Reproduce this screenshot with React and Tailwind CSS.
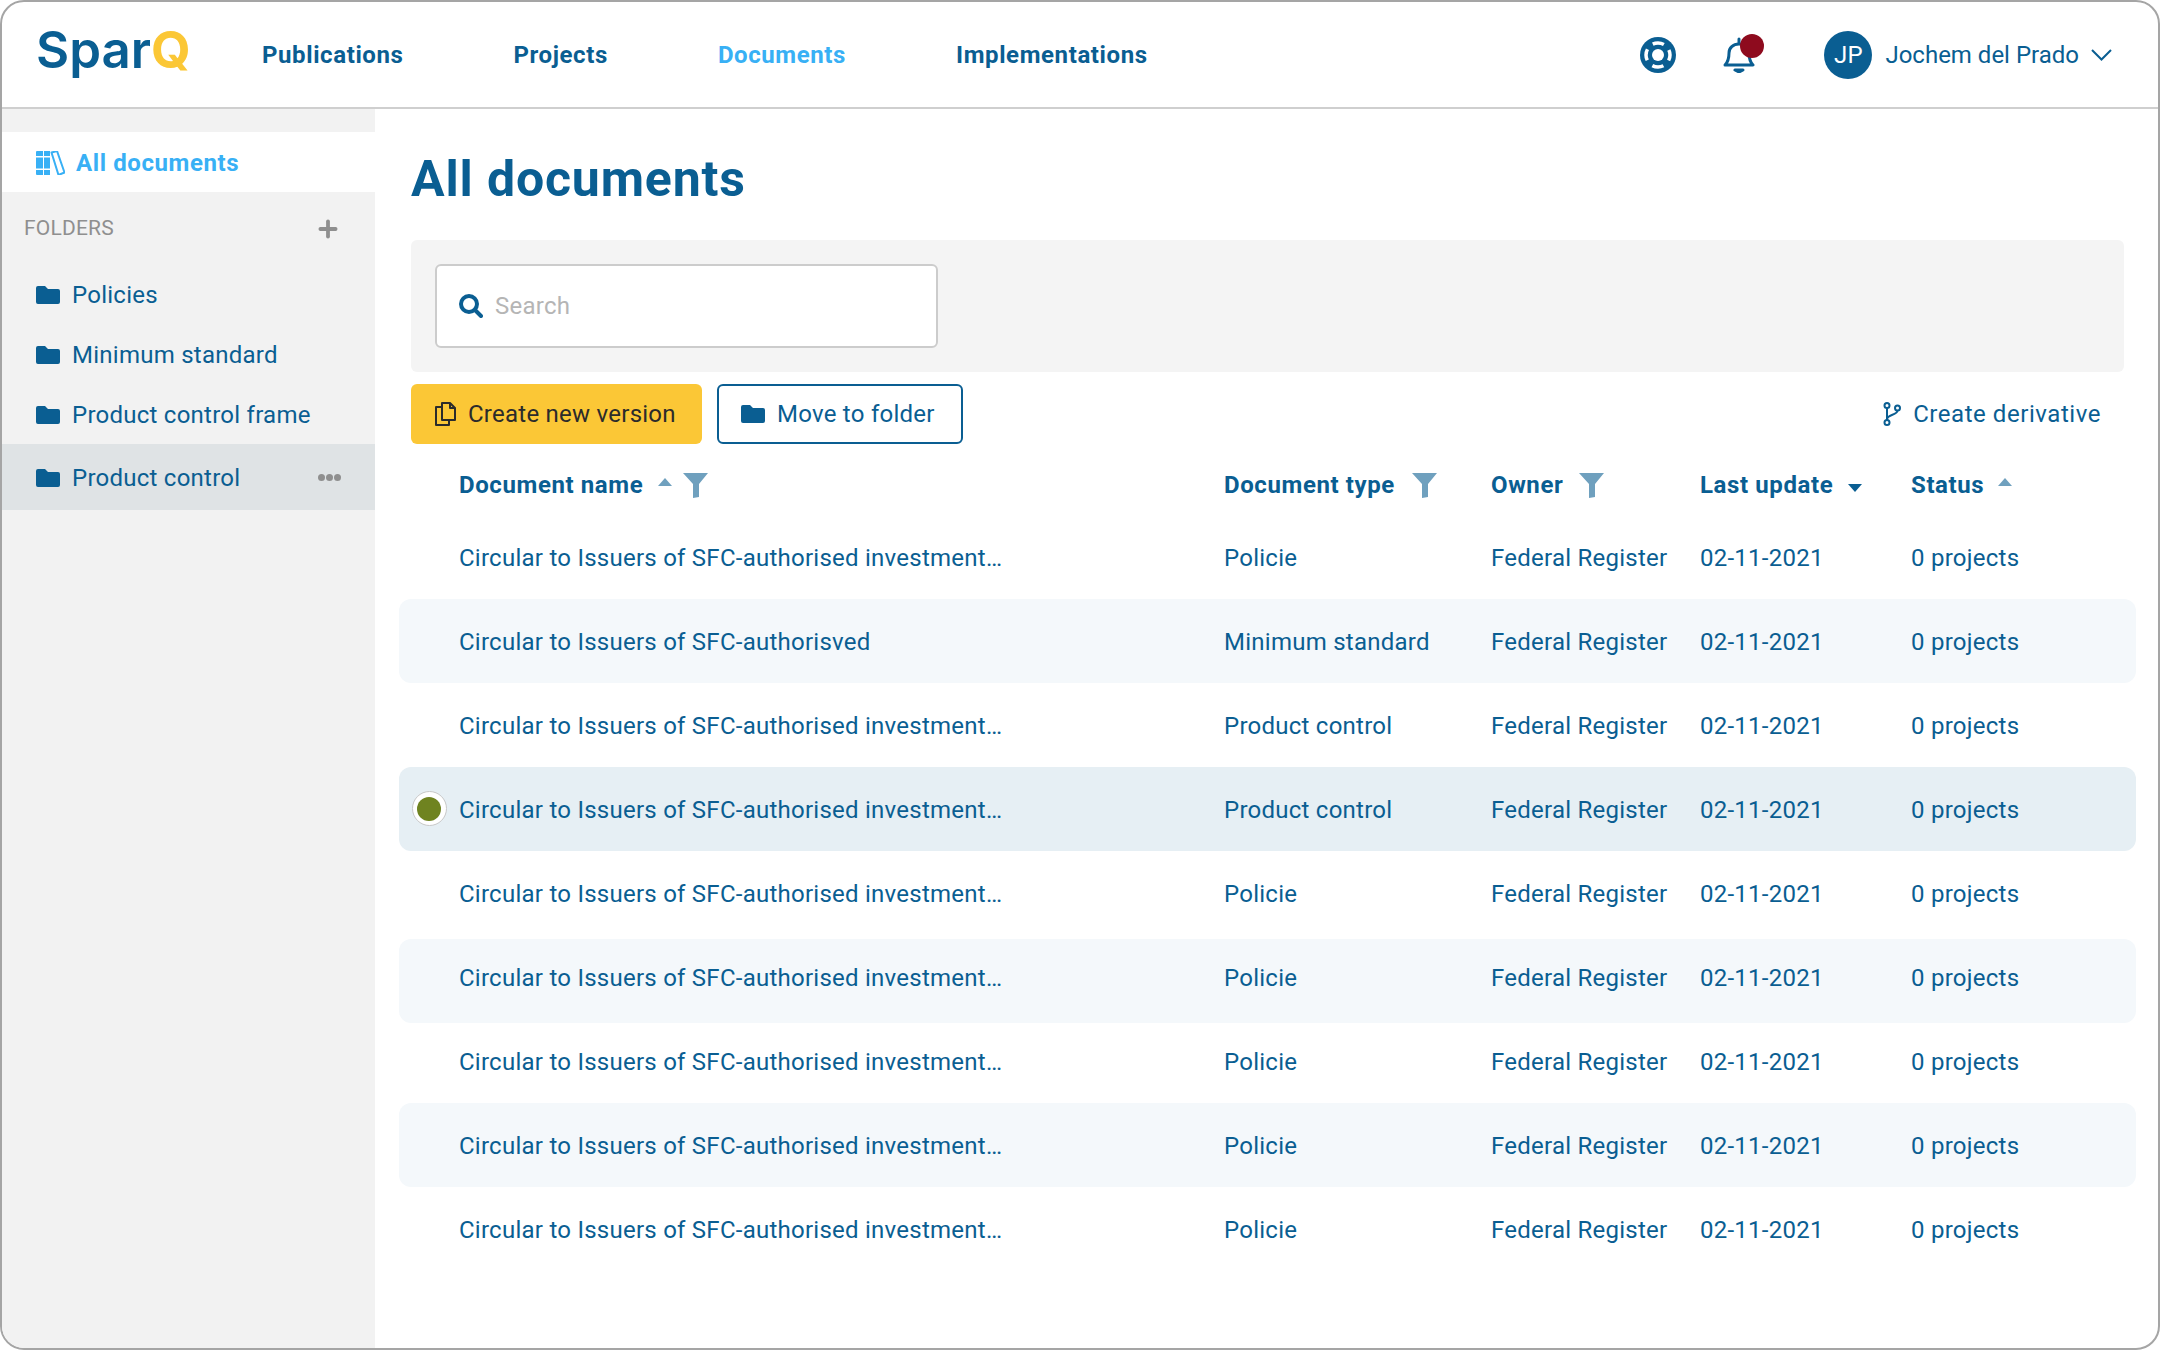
import React from 'react';
import { Plus } from 'lucide-react';

const font = { fontFamily: 'Roboto, sans-serif' };

const navItems = ['Publications', 'Projects', 'Documents', 'Implementations'];
const folders = ['Policies', 'Minimum standard', 'Product control frame'];

const rows = [
    { name: 'Circular to Issuers of SFC-authorised investment…', type: 'Policie' },
    { name: 'Circular to Issuers of SFC-authorisved', type: 'Minimum standard', tint: 'bg-[#f4f8fb]' },
    { name: 'Circular to Issuers of SFC-authorised investment…', type: 'Product control' },
    { name: 'Circular to Issuers of SFC-authorised investment…', type: 'Product control', tint: 'bg-[#e6eff4]', selected: true },
    { name: 'Circular to Issuers of SFC-authorised investment…', type: 'Policie' },
    // фон этой строки в макете сдвинут на 4px вниз относительно текста
    { name: 'Circular to Issuers of SFC-authorised investment…', type: 'Policie', tint: 'bg-[#f4f8fb] mt-[4px] -mb-[4px] pb-[8px]' },
    { name: 'Circular to Issuers of SFC-authorised investment…', type: 'Policie' },
    { name: 'Circular to Issuers of SFC-authorised investment…', type: 'Policie', tint: 'bg-[#f4f8fb]' },
    { name: 'Circular to Issuers of SFC-authorised investment…', type: 'Policie' },
];

function FolderIcon({ className }) {
    return (
        <svg viewBox="0 0 24 18" className={className} fill="currentColor">
            <path d="M2 0h7l3 3h10a2 2 0 0 1 2 2v11a2 2 0 0 1-2 2H2a2 2 0 0 1-2-2V2a2 2 0 0 1 2-2z" />
        </svg>
    );
}

function FilterIcon() {
    return (
        <svg viewBox="0 0 25 25" className="w-[25px] h-[25px] text-[#6fa0be]" fill="currentColor">
            <path d="M0 0h25L16 11v13l-6 1V11z" />
        </svg>
    );
}

function SortArrow({ down, className }) {
    return (
        <svg viewBox="0 0 14 8" className={`w-[14px] h-[8px] ${className}`} fill="currentColor">
            <path d={down ? 'M0 0h14L7 8z' : 'M7 0l7 8H0z'} />
        </svg>
    );
}

function BooksIcon() {
    return (
        <svg viewBox="0 0 29 24" className="w-[29px] h-[24px] text-[#38b0f5]" fill="currentColor">
            <path d="M1 0h6v24H1a1 1 0 0 1-1-1V1a1 1 0 0 1 1-1zM8 0h6v24H8z" />
            <path d="M0 5h14v1.5H0zM0 17.5h14v1.5H0z" fill="#fff" />
            <path d="M15.5 1.5l5.5-1.5 7.5 21.5-6 2.5z" fill="none" stroke="currentColor" strokeWidth="2" strokeLinejoin="round" />
        </svg>
    );
}

function LifeRing() {
    return (
        <svg viewBox="0 0 36 36" className="w-[36px] h-[36px] text-[#0a5e92]">
            <circle cx="18" cy="18" r="18" fill="currentColor" />
            <circle cx="18" cy="18" r="12" fill="none" stroke="#fff" strokeWidth="3.5" strokeDasharray="11.5 7.35" strokeDashoffset="5.75" />
            <circle cx="18" cy="18" r="6" fill="#fff" />
        </svg>
    );
}

function Bell() {
    return (
        <svg viewBox="0 0 32 36" className="w-[32px] h-[36px] text-[#0a5e92]" fill="none" stroke="currentColor" strokeWidth="3" strokeLinejoin="round" strokeLinecap="round">
            <path d="M2 28c3-3 4-6 4-12 0-5 4-9 10-9s10 4 10 9c0 6 1 9 4 12z" />
            <path d="M16 2v4" />
            <path d="M12 33h8l-4 2z" fill="currentColor" />
        </svg>
    );
}

function CopyIcon() {
    return (
        <svg viewBox="0 0 21 24" className="w-[21px] h-[24px] text-[#2b2b2b]" fill="none" stroke="currentColor" strokeWidth="2" strokeLinejoin="round">
            <path d="M7 1h8l5 5v12H7z" />
            <path d="M15 1v5h5" />
            <path d="M7 5H1v18h13v-5" />
        </svg>
    );
}

function BranchIcon() {
    return (
        <svg viewBox="0 0 18 24" className="w-[18px] h-[24px]" fill="none" stroke="currentColor" strokeWidth="2">
            <circle cx="4" cy="3.5" r="2.5" />
            <circle cx="4" cy="20.5" r="2.5" />
            <circle cx="14.5" cy="6" r="2.5" />
            <path d="M4 6v12" />
            <path d="M14.5 8.5c0 5-10.5 3.5-10.5 9" />
        </svg>
    );
}

export default function App() {
    return (
        <div className="w-[2160px] h-[1350px] bg-white border-2 border-[#a5a5a5] rounded-[24px] overflow-hidden text-[24px] tracking-[0.25px] text-[#0a5e92] flex flex-col" style={font}>
            {/* Шапка */}
            <header className="h-[107px] shrink-0 border-b-2 border-[#cfcfcf] flex items-center pl-[34px] pr-[46px]">
                <div className="w-[226px] text-[51px] font-semibold leading-none tracking-normal -mt-[10px]" style={{ fontFamily: 'Inter, sans-serif' }}>
                    Spar<span className="text-[#fbc736] font-bold">Q</span>
                </div>
                <nav className="flex gap-[110px] font-bold tracking-[0.6px]">
                    {navItems.map(item => (
                        <span key={item} className={item === 'Documents' ? 'text-[#38b0f5]' : ''}>{item}</span>
                    ))}
                </nav>
                <div className="ml-auto flex items-center">
                    <LifeRing />
                    <div className="relative ml-[47px] mr-[69px]">
                        <Bell />
                        <div className="absolute -top-[3px] left-[17px] w-[24px] h-[24px] rounded-full bg-[#8e0b1e]" />
                    </div>
                    <div className="w-[48px] h-[48px] rounded-full bg-[#0a5e92] text-white flex items-center justify-center">JP</div>
                    <span className="ml-[13px] tracking-normal">Jochem del Prado</span>
                    <svg viewBox="0 0 21 12" className="ml-[12px] w-[21px] h-[12px]" fill="none" stroke="currentColor" strokeWidth="2">
                        <path d="M1 1l9.5 9.5L20 1" />
                    </svg>
                </div>
            </header>

            <div className="flex flex-1 min-h-0">
                {/* Боковая панель */}
                <aside className="w-[373px] bg-[#f2f2f2] pt-[23px]">
                    <div className="h-[60px] pt-[1px] bg-white flex items-center gap-[11px] pl-[34px] font-bold tracking-[0.6px] text-[#38b0f5]">
                        <BooksIcon />
                        All documents
                    </div>
                    <div className="h-[72px] pt-[1px] flex items-center justify-between pl-[22px] pr-[34px] text-[21px] tracking-[0.2px] text-[#8f8f8f]">
                        FOLDERS
                        <Plus className="w-[26px] h-[26px]" strokeWidth={3.5} />
                    </div>
                    <div className="flex flex-col">
                        {folders.map(name => (
                            <div key={name} className="h-[60px] pt-[1px] flex items-center gap-[12px] pl-[34px]">
                                <FolderIcon className="w-[24px] h-[18px]" />
                                {name}
                            </div>
                        ))}
                        <div className="h-[66px] pt-[1px] bg-[#dfe3e5] flex items-center gap-[12px] pl-[34px] pr-[34px]">
                            <FolderIcon className="w-[24px] h-[18px]" />
                            Product control
                            <div className="ml-auto flex gap-[1px]">
                                <span className="w-[7px] h-[7px] rounded-full bg-[#8f8f8f]" />
                                <span className="w-[7px] h-[7px] rounded-full bg-[#8f8f8f]" />
                                <span className="w-[7px] h-[7px] rounded-full bg-[#8f8f8f]" />
                            </div>
                        </div>
                    </div>
                </aside>

                {/* Контент */}
                <main className="flex-1 min-w-0 pl-[36px] pr-[34px] pt-[23px]">
                    <h1 className="h-[108px] text-[50px] font-bold tracking-[0.85px] leading-[56px] pt-[19px]">All documents</h1>
                    <div className="h-[132px] bg-[#f4f4f4] rounded-[6px] flex items-center px-[24px]">
                        <div className="w-[503px] h-[84px] bg-white border-2 border-[#cccccc] rounded-[6px] flex items-center pl-[22px] gap-[12px]">
                            <svg viewBox="0 0 24 24" className="w-[24px] h-[24px]" fill="none" stroke="currentColor" strokeWidth="4">
                                <circle cx="10" cy="10" r="8" />
                                <path d="M16 16l6 6" strokeLinecap="round" />
                            </svg>
                            <span className="text-[#b5b5b5]">Search</span>
                        </div>
                    </div>

                    <div className="mt-[12px] h-[60px] flex items-center">
                        <button className="h-[60px] w-[291px] bg-[#fbc736] rounded-[6px] flex items-center pl-[24px] gap-[12px] text-[#2b2b2b]">
                            <CopyIcon />
                            Create new version
                        </button>
                        <button className="ml-[15px] h-[60px] w-[246px] border-2 border-[#0a5e92] rounded-[6px] flex items-center pl-[22px] gap-[12px]">
                            <FolderIcon className="w-[24px] h-[18px]" />
                            Move to folder
                        </button>
                        <div className="ml-auto mr-[23px] flex items-center gap-[12px] tracking-[0.55px]">
                            <BranchIcon />
                            Create derivative
                        </div>
                    </div>

                    {/* Таблица */}
                    <div className="-ml-[12px] -mr-[12px] mt-[11px]">
                        <div className="h-[60px] grid grid-cols-[60px_765px_267px_209px_211px_1fr] items-center font-bold tracking-[0.6px]">
                            <span />
                            <div className="flex items-center">
                                Document name
                                <SortArrow className="ml-[15px] -mt-[6px] text-[#6fa0be]" />
                                <span className="ml-[11px]"><FilterIcon /></span>
                            </div>
                            <div className="flex items-center gap-[17px]">Document type <FilterIcon /></div>
                            <div className="flex items-center gap-[16px]">Owner <FilterIcon /></div>
                            <div className="flex items-center">
                                Last update
                                <SortArrow down className="ml-[15px] mt-[6px]" />
                            </div>
                            <div className="flex items-center">
                                Status
                                <SortArrow className="ml-[14px] -mt-[6px] text-[#6fa0be]" />
                            </div>
                        </div>
                        {rows.map((row, i) => (
                            <div key={i} className={`h-[84px] pt-[1px] rounded-[12px] grid grid-cols-[60px_765px_267px_209px_211px_1fr] items-center ${row.tint || ''}`}>
                                <div className="flex justify-center">
                                    {row.selected && (
                                        <span className="w-[35px] h-[35px] -mt-[2px] rounded-full bg-white border border-[#c8c8c8] flex items-center justify-center">
                                            <span className="w-[24px] h-[24px] rounded-full bg-[#6f8320]" />
                                        </span>
                                    )}
                                </div>
                                <span>{row.name}</span>
                                <span>{row.type}</span>
                                <span>Federal Register</span>
                                <span>02-11-2021</span>
                                <span>0 projects</span>
                            </div>
                        ))}
                    </div>
                </main>
            </div>
        </div>
    );
}
